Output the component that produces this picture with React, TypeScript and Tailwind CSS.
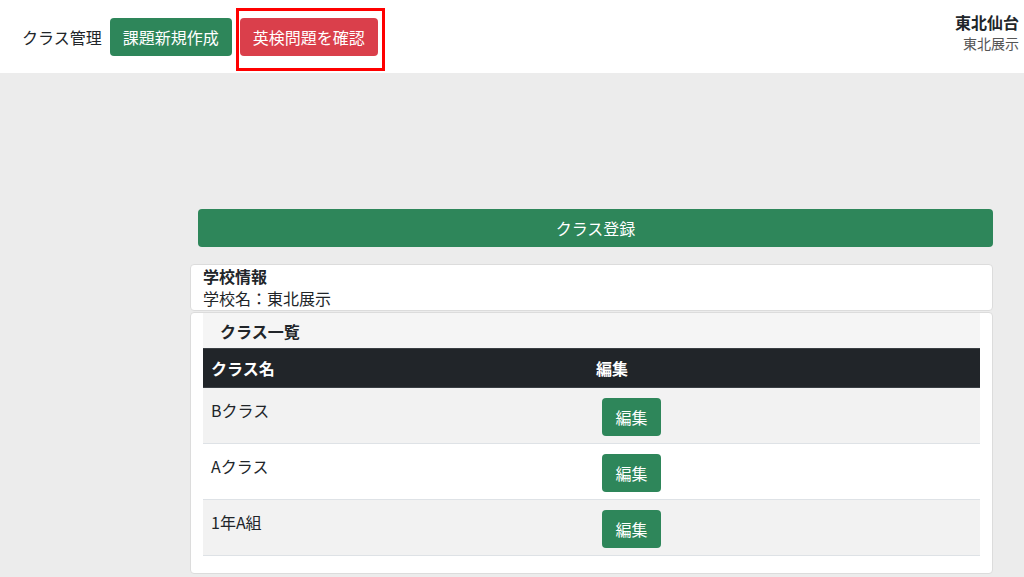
import React from "react";

const font = {
  fontFamily: '"Noto Sans CJK JP", "Noto Sans", "Liberation Sans", sans-serif',
};

const classes = ["Bクラス", "Aクラス", "1年A組"];

export default function App() {
  return (
    <div
      className="flex min-h-[577px] w-[1024px] flex-col bg-[#ececec] text-[16px] text-[#212529]"
      style={font}
    >
      <header className="flex h-[73px] items-center justify-between bg-white pl-[22px] pr-[5px]">
        <div className="flex items-center">
          <span className="mr-[8px] leading-[24px]">クラス管理</span>
          <button className="h-[38px] rounded-[4px] bg-[#2e865a] px-[13px] leading-[24px] text-white">
            課題新規作成
          </button>
          <div className="relative ml-[8px]">
            <button className="h-[38px] rounded-[4px] bg-[#da3f4b] px-[13px] leading-[24px] text-white">
              英検問題を確認
            </button>
            <div className="pointer-events-none absolute -left-[4px] -top-[10px] h-[63px] w-[149px] border-[3px] border-[#ff0000]" />
          </div>
        </div>
        <div className="flex flex-col items-end pb-[10px]">
          <span className="text-[16px] font-bold leading-[22px]">東北仙台</span>
          <span className="text-[14px] leading-[20px] text-[#555]">東北展示</span>
        </div>
      </header>

      <main className="flex flex-col pl-[190px] pr-[31px] pt-[136px]">
        <button className="ml-[8px] h-[38px] rounded-[4px] bg-[#2e865a] leading-[24px] text-white">
          クラス登録
        </button>

        <div className="mt-[17px] rounded-[4px] border border-[#dcdcdc] bg-white px-[12px] pb-[1px]">
          <div className="font-bold leading-[22px]">学校情報</div>
          <div className="leading-[22px]">学校名：東北展示</div>
        </div>

        <div className="mt-[1px] rounded-[4px] border border-[#dcdcdc] bg-white px-[12px] pb-[17px]">
          <div className="flex h-[35px] items-center bg-[#f5f5f5] pl-[17px] font-bold">
            クラス一覧
          </div>
          <div className="flex h-[40px] items-center border-y border-[#3a3f44] bg-[#212529] font-bold text-white">
            <div className="w-[385px] pl-[8px]">クラス名</div>
            <div className="pl-[8px]">編集</div>
          </div>
          {classes.map((name, i) => (
            <div
              key={name}
              className={
                "flex border-b border-[#dee2e6] pb-[7px] pt-[10px] " +
                (i % 2 === 0 ? "bg-[#f2f2f2]" : "bg-white")
              }
            >
              <div className="w-[385px] pl-[8px] leading-[24px]">{name}</div>
              <div className="pl-[14px]">
                <button className="h-[38px] w-[59px] rounded-[4px] bg-[#2e865a] leading-[24px] text-white">
                  編集
                </button>
              </div>
            </div>
          ))}
        </div>
      </main>
    </div>
  );
}
